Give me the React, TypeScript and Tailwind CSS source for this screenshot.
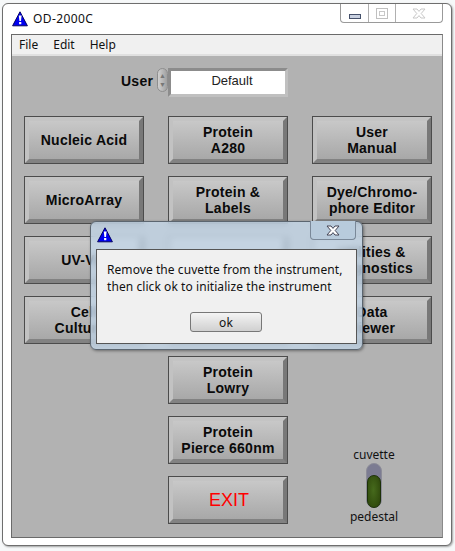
import React from "react";

const font = { fontFamily: '"Liberation Sans", Arial, sans-serif' };
const ui = "font-['Noto_Sans','Liberation_Sans',sans-serif]";

function Warn({ className }: { className?: string }) {
  return (
    <svg viewBox="0 0 16 16" width="16" height="16" className={className}>
      <path d="M8 .8 L15.4 14.8 H.6 Z" fill="#0000f0" stroke="#000060" strokeWidth="1" strokeLinejoin="round" />
      <path d="M6.8 4.6 H9.6 L9 10 H7.4 Z" fill="#fff" />
      <rect x="7.1" y="11" width="2.2" height="2.2" fill="#fff" />
    </svg>
  );
}

function CloseGlyph({ fill, stroke }: { fill: string; stroke: string }) {
  return (
    <svg viewBox="0 0 14 11" width="14" height="11">
      <path
        d="M1 1 H5 L7 3.4 L9 1 H13 L9.2 5.5 L13 10 H9 L7 7.6 L5 10 H1 L4.8 5.5 Z"
        fill={fill}
        stroke={stroke}
        strokeWidth="1"
        strokeLinejoin="round"
      />
    </svg>
  );
}

function Btn({ a, b, red }: { a?: string; b?: string; red?: boolean }) {
  return (
    <div className="h-[48px] w-[120px] border border-[#4c4c4c] bg-[#b0b0b0]">
      <div className="h-full border-[4px] border-t-[#c4c4c4] border-l-[#c2c2c2] border-r-[#787878] border-b-[#828282]">
        <div className="flex h-full flex-col items-center justify-center bg-gradient-to-b from-[#c8c8c8] to-[#a8a8a8] text-center">
          {red ? (
            <span className="ml-[2px] text-[18px] leading-[20px] text-[#ff0000]">{a}</span>
          ) : (
            <>
              {a && <span className="text-[14px] font-bold leading-[16px] tracking-[0.25px] text-[#0a0a0a]">{a}</span>}
              {b && <span className="text-[14px] font-bold leading-[16px] tracking-[0.25px] text-[#0a0a0a]">{b}</span>}
            </>
          )}
        </div>
      </div>
    </div>
  );
}

export default function App() {
  return (
    <div style={font} className="relative h-[551px] w-[455px] overflow-hidden bg-[#f6f8f9]">
      {/* window frame */}
      <div className="absolute left-[2px] top-[3px] h-[543px] w-[450px] rounded-[6px] border border-[#6e6e6e] bg-white pl-[8px] shadow-[1px_1px_2px_rgba(0,0,0,0.35)]">
        <div className="flex h-[30px] items-center">
          <Warn className="ml-[1px]" />
          <span className={`${ui} ml-[5px] text-[12px] tracking-[0.4px] text-[#111]`}>OD-2000C</span>
        </div>
        <div className="absolute right-[8px] top-0 flex h-[19px] w-[103px] rounded-b-[4px] border border-t-0 border-[#9a9a9a] bg-white">
          <div className="flex w-[28px] items-center justify-center border-r border-[#b0b0b0]">
            <div className="mt-[6px] h-[5px] w-[12px] border border-[#44506a] bg-[#c8d0e0]" />
          </div>
          <div className="flex w-[27px] items-center justify-center border-r border-[#b0b0b0]">
            <div className="flex h-[11px] w-[12px] items-center justify-center border border-[#c0c0c0]">
              <div className="h-[5px] w-[6px] border border-[#c8c8c8]" />
            </div>
          </div>
          <div className="flex flex-1 items-center justify-center">
            <CloseGlyph fill="#ffffff" stroke="#c8c8c8" />
          </div>
        </div>

        {/* client */}
        <div className="h-[504px] w-[432px] border border-[#6a6a6a] border-r-[#8a8a8a] bg-[#b2b2b2]">
          <div className={`${ui} flex h-[21px] items-center gap-[15px] border-b-2 border-b-[#e0e0e0] bg-[#f0f0f0] pl-[7px] text-[12px] text-[#111]`}>
            <span>File</span>
            <span>Edit</span>
            <span>Help</span>
          </div>

          <div className="flex h-[60px] items-start pl-[109px] pt-[12px]">
            <span className="mt-[5px] w-[35px] text-[14px] font-bold leading-[16px] tracking-[0.25px] text-[#0a0a0a]">User</span>
            <div className="ml-[1px] mt-[0px] flex h-[24px] w-[11px] flex-col items-center justify-center rounded-full border border-[#8e8e8e] bg-gradient-to-r from-[#d0d0d0] to-[#a0a0a0] text-[7px] leading-[9px] text-[#777]">
              <span>▲</span>
              <span>▼</span>
            </div>
            <div className="h-[29px] w-[120px] border-[3px] border-t-[#8c8c8c] border-l-[#8c8c8c] border-r-[#c0c0c0] border-b-[#c0c0c0] bg-white pl-[8px] text-center text-[13px] leading-[19px] text-[#222]">
              Default
            </div>
          </div>

          <div className="flex gap-[24px] pl-[12px]">
            <div className="flex flex-col gap-[12px]">
              <Btn a="Nucleic Acid" />
              <Btn a="MicroArray" />
              <Btn a="UV-Vis" />
              <Btn a="Cell" b="Cultures" />
            </div>
            <div className="flex flex-col gap-[12px]">
              <Btn a="Protein" b="A280" />
              <Btn a="Protein &" b="Labels" />
              <Btn />
              <Btn />
              <Btn a="Protein" b="Lowry" />
              <Btn a="Protein" b="Pierce 660nm" />
              <Btn a="EXIT" red />
            </div>
            <div className="flex flex-col gap-[12px]">
              <Btn a="User" b="Manual" />
              <Btn a="Dye/Chromo-" b="phore Editor" />
              <Btn a="Utilities &" b="Diagnostics" />
              <Btn a="Data" b="Viewer" />
              <div className={`${ui} ml-[12px] mt-[91px] flex w-[100px] flex-col items-center text-[12px] leading-[16px] text-[#111]`}>
                <span>cuvette</span>
                <div className="relative mb-[1px] h-[45px] w-[16px] rounded-full border border-[#8c8c98] bg-[#7c7c92]">
                  <div className="absolute bottom-[-1px] left-0 h-[33px] w-[14px] rounded-full border border-[#1c3008] bg-[radial-gradient(ellipse_at_45%_45%,#466a1c,#2a4208)]" />
                </div>
                <span>pedestal</span>
              </div>
            </div>
          </div>
        </div>
      </div>

      {/* dialog */}
      <div className="absolute left-[90px] top-[221px] h-[129px] w-[273px] rounded-[6px] border border-[#5c6670] bg-[#c4daee]/70 shadow-[1px_1px_3px_rgba(0,0,0,0.4)] backdrop-blur-[3px]">
        <Warn className="absolute left-[6px] top-[5px]" />
        <div className="absolute right-[6px] top-[-1px] flex h-[19px] w-[46px] items-center justify-center rounded-b-[4px] border border-t-0 border-[#7a8898] bg-[#b8cbdc]">
          <CloseGlyph fill="#ffffff" stroke="#445" />
        </div>
        <div className={`${ui} absolute left-[5px] top-[27px] h-[95px] w-[261px] border border-[#555] bg-[#f0f0f0] px-[10px] pt-[11px] text-[12px] leading-[17px] tracking-[0.07px] text-[#111]`}>
          <div className="whitespace-nowrap">Remove the cuvette from the instrument,</div>
          <div className="whitespace-nowrap">then click ok to initialize the instrument</div>
          <div className="absolute left-[93px] top-[62px] flex h-[20px] w-[72px] items-center justify-center rounded-[3px] border border-[#777] bg-gradient-to-b from-[#f4f4f4] to-[#d0d0d0]">
            ok
          </div>
        </div>
      </div>
    </div>
  );
}
